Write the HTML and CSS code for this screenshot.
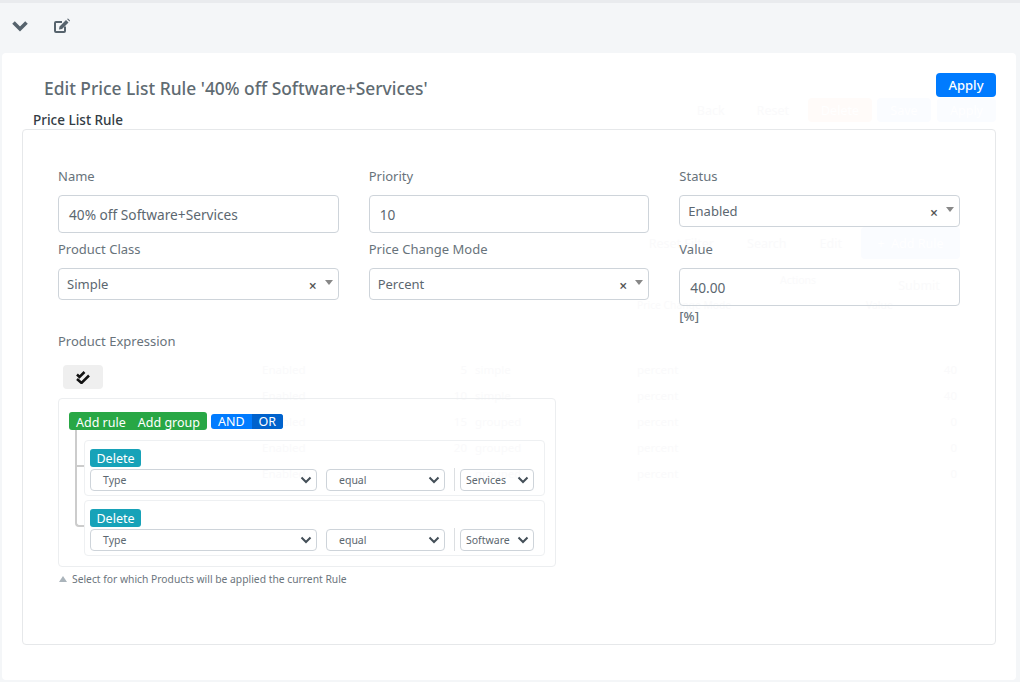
FILE: index.html
```html
<!DOCTYPE html>
<html lang="en">
<head>
  <meta charset="UTF-8">
  <title>Edit Price List Rule</title>
  <link rel="stylesheet" href="styles.css">
</head>
<body>
  <div class="toolbar">
    <svg class="tool-icon" width="18" height="14" viewBox="0 0 18 14"><path d="M2.500 3.500 L9 10 L15.500 3.500" fill="none" stroke="#56636d" stroke-width="3.600"/></svg>
    <svg class="tool-icon edit-icon" width="18" height="16" viewBox="0 0 18 16"><path d="M12 8.500V13a1 1 0 0 1-1 1H3a1 1 0 0 1-1-1V5a1 1 0 0 1 1-1h6" fill="none" stroke="#56636d" stroke-width="2"/><path d="M6.500 8.500 L13 2 L15.500 4.500 L9 11 L6 11.500 Z M14 1 L15 0.500 L17 2.500 L16.500 3.500 Z" fill="#56636d"/></svg>
  </div>

  <div class="card">
    <!-- page behind the dialog, barely showing through -->
    <div class="ghost">
      <div class="ghost-actions">
        <span class="g-back">Back</span>
        <span class="g-reset">Reset</span>
        <span class="g-btn g-delete">Delete</span>
        <span class="g-btn g-save">Save</span>
        <span class="g-btn g-apply">Apply</span>
      </div>
      <div class="ghost-filter">
        <span>Reset Filter</span>
        <span>Search</span>
        <span>Edit</span>
        <span class="g-btn g-add">+ &nbsp;Add Rule</span>
      </div>
      <div class="ghost-submit">
        <span class="g-small">Actions</span>
        <span class="g-submit">Submit</span>
      </div>
      <div class="ghost-head">
        <span>Price Change Mode</span>
        <span>Value</span>
      </div>
      <div class="ghost-table">
        <span>Enabled</span><span class="num">5</span><span class="kind">simple</span><span>percent</span><span class="num">40</span>
        <span>Enabled</span><span class="num">10</span><span class="kind">simple</span><span>percent</span><span class="num">40</span>
        <span>Enabled</span><span class="num">15</span><span class="kind">grouped</span><span>percent</span><span class="num">0</span>
        <span>Enabled</span><span class="num">20</span><span class="kind">grouped</span><span>percent</span><span class="num">0</span>
        <span>Enabled</span><span class="num"></span><span class="kind">grouped</span><span>percent</span><span class="num">0</span>
      </div>
    </div>

    <div class="card-head">
      <h1>Edit Price List Rule '40% off Software+Services'</h1>
      <button class="apply-btn">Apply</button>
    </div>
    <div class="legend">Price List Rule</div>

    <div class="panel">
      <div class="form-grid">
        <div class="field">
          <label>Name</label>
          <div class="text-input">40% off Software+Services</div>
        </div>
        <div class="field">
          <label>Priority</label>
          <div class="text-input">10</div>
        </div>
        <div class="field">
          <label>Status</label>
          <div class="combo"><span>Enabled</span><i class="clear">×</i><i class="caret"></i></div>
        </div>
        <div class="field">
          <label>Product Class</label>
          <div class="combo"><span>Simple</span><i class="clear">×</i><i class="caret"></i></div>
        </div>
        <div class="field">
          <label>Price Change Mode</label>
          <div class="combo"><span>Percent</span><i class="clear">×</i><i class="caret"></i></div>
        </div>
        <div class="field">
          <label>Value</label>
          <div class="text-input">40.00</div>
          <div class="unit">[%]</div>
        </div>
      </div>

      <div class="expression">
        <label>Product Expression</label>
        <button class="check-btn">
          <svg width="14" height="13" viewBox="0 0 14 13"><path d="M1 3.500 L3.500 6 L8.500 1 M1 8 L5.500 12 L13 4.500" fill="none" stroke="#111" stroke-width="2.500"/></svg>
        </button>

        <div class="builder">
          <div class="group-head">
            <div class="btn-group green"><span>Add rule</span><span>Add group</span></div>
            <div class="btn-group blue"><span>AND</span><span class="dark">OR</span></div>
          </div>
          <div class="rules">
            <div class="rule">
              <button class="del-btn">Delete</button>
              <div class="rule-line">
                <div class="sel sel-field">Type<svg width="12" height="8" viewBox="0 0 12 8"><path d="M1.500 1.500 L6 6 L10.500 1.500" fill="none" stroke="#444f58" stroke-width="2"/></svg></div>
                <div class="sel sel-op">equal<svg width="12" height="8" viewBox="0 0 12 8"><path d="M1.500 1.500 L6 6 L10.500 1.500" fill="none" stroke="#444f58" stroke-width="2"/></svg></div>
                <div class="sep"></div>
                <div class="sel sel-val">Services<svg width="12" height="8" viewBox="0 0 12 8"><path d="M1.500 1.500 L6 6 L10.500 1.500" fill="none" stroke="#444f58" stroke-width="2"/></svg></div>
              </div>
            </div>
            <div class="rule">
              <button class="del-btn">Delete</button>
              <div class="rule-line">
                <div class="sel sel-field">Type<svg width="12" height="8" viewBox="0 0 12 8"><path d="M1.500 1.500 L6 6 L10.500 1.500" fill="none" stroke="#444f58" stroke-width="2"/></svg></div>
                <div class="sel sel-op">equal<svg width="12" height="8" viewBox="0 0 12 8"><path d="M1.500 1.500 L6 6 L10.500 1.500" fill="none" stroke="#444f58" stroke-width="2"/></svg></div>
                <div class="sep"></div>
                <div class="sel sel-val">Software<svg width="12" height="8" viewBox="0 0 12 8"><path d="M1.500 1.500 L6 6 L10.500 1.500" fill="none" stroke="#444f58" stroke-width="2"/></svg></div>
              </div>
            </div>
            <div class="tree-line"></div>
          </div>
        </div>

        <div class="hint"><i class="hint-arrow"></i>Select for which Products will be applied the current Rule</div>
      </div>
    </div>
  </div>
</body>
</html>
```

FILE: styles.css
```css
* {
  box-sizing: border-box;
}

body {
  margin: 0;
  height: 682px;
  overflow: hidden;
  font-family: "Noto Sans", "Open Sans", sans-serif;
  font-size: 13px;
  color: #5f6a72;
  background-color: #f4f6f8;
  border-top: 3px solid #e9ebee;
}

.toolbar {
  height: 50px;
  display: flex;
  align-items: center;
  padding: 0 0 4px 11px;
  gap: 24px;
}

.card {
  margin: 0 4px 0 2px;
  height: 627px;
  background-color: #fff;
  border-radius: 4px;
  padding: 20px 20px 0;
  position: relative;
  z-index: 0;
}

.ghost {
  position: absolute;
  inset: 0;
  z-index: -1;
  color: #fafafb;
  font-size: 12.500px;
}

.ghost-actions,
.ghost-filter,
.ghost-submit,
.ghost-head,
.ghost-table {
  position: absolute;
  display: flex;
  align-items: center;
}

.ghost-actions {
  top: 45px;
  right: 20px;
  height: 24px;
}

.g-back {
  margin-right: 32px;
}

.g-reset {
  margin-right: 19px;
}

.g-btn {
  display: flex;
  align-items: center;
  justify-content: center;
  height: 100%;
  border-radius: 4px;
  color: #fff;
}

.g-delete {
  width: 64px;
  margin-right: 5px;
  background-color: #fffbf9;
}

.g-save {
  width: 54px;
  margin-right: 6px;
  background-color: #fafcff;
}

.g-apply {
  width: 59px;
  background-color: #fafcff;
}

.ghost-filter {
  top: 174px;
  right: 56px;
  height: 32px;
  gap: 33px;
}

.g-add {
  width: 99px;
  margin-left: -14px;
  background-color: #fafcff;
}

.ghost-submit {
  top: 212px;
  left: 778px;
  gap: 82px;
}

.g-small {
  font-size: 10.500px;
}

.g-submit {
  margin-top: 12px;
}

.ghost-head {
  top: 245px;
  left: 635px;
  gap: 135px;
  font-size: 10.300px;
}

.ghost-table {
  top: 303px;
  left: 260px;
  display: grid;
  grid-template-columns: 175px 30px 170px 300px 20px;
  grid-auto-rows: 26px;
  font-size: 11.500px;
}

.ghost-table .num {
  text-align: right;
}

.ghost-table .kind {
  padding-left: 8px;
}

.card-head {
  display: flex;
  justify-content: space-between;
  height: 36px;
}

h1 {
  margin: 3px 0 0 22px;
  font-size: 17.400px;
  font-weight: 500;
  line-height: 24px;
  color: #5f6b72;
}

.apply-btn {
  width: 60px;
  height: 24px;
  border: none;
  border-radius: 4px;
  background-color: #007bff;
  color: #fff;
  font: 500 13px "Noto Sans", sans-serif;
}

.legend {
  margin-left: 11px;
  height: 20px;
  line-height: 22px;
  font-size: 13.500px;
  font-weight: 500;
  color: #333c44;
}

.panel {
  height: 516px;
  border: 1px solid #e6e8ea;
  border-radius: 4px;
  padding: 36px 35px 0;
}

.form-grid {
  display: grid;
  grid-template-columns: repeat(3, 1fr);
  column-gap: 30px;
}

label {
  display: block;
  height: 19px;
  line-height: 21px;
  font-size: 13px;
  color: #68737b;
}

.field {
  height: 73px;
}

.field:nth-child(n+4) {
  height: auto;
}

.text-input {
  height: 38px;
  margin-top: 10px;
  padding-left: 10px;
  line-height: 38px;
  border: 1px solid #ced4da;
  border-radius: 4px;
  font-size: 13.700px;
  color: #5c6770;
}

.combo {
  display: flex;
  align-items: center;
  height: 32px;
  margin-top: 10px;
  padding-left: 8px;
  border: 1px solid #ced4da;
  border-radius: 4px;
  font-size: 13px;
  color: #5c6770;
  position: relative;
}

.combo span {
  flex: 1;
}

.clear {
  font-style: normal;
  font-size: 14px;
  font-weight: 600;
  color: #555;
  margin: 2px 21px 0 0;
}

.caret {
  position: absolute;
  right: 5px;
  top: 11px;
  border-left: 4px solid transparent;
  border-right: 4px solid transparent;
  border-top: 5px solid #888;
}

.unit {
  margin-top: 1px;
  line-height: 19px;
  font-size: 13px;
  font-weight: 500;
  color: #68737b;
}

.expression {
  margin-top: 5px;
}

.check-btn {
  display: flex;
  align-items: center;
  justify-content: center;
  width: 40px;
  height: 24px;
  margin: 15px 0 9px 5px;
  padding: 0;
  border: none;
  border-radius: 4px;
  background-color: #efefef;
}

.builder {
  width: 498px;
  height: 169px;
  border: 1px solid #eceef0;
  border-radius: 4px;
  padding: 13px 10px 0;
}

.group-head {
  display: flex;
  align-items: center;
  gap: 4px;
}

.btn-group {
  display: flex;
  color: #fff;
  font-size: 12.500px;
  border-radius: 3px;
  overflow: hidden;
}

.green {
  background-color: #28a745;
  height: 18px;
  line-height: 21px;
  padding: 0 7px;
  gap: 12px;
}

.blue {
  background-color: #007bff;
  height: 15px;
  line-height: 16px;
}

.blue span {
  padding: 0 7px;
}

.blue .dark {
  background-color: #0062cc;
}

.rules {
  position: relative;
  margin-top: 10px;
  padding-left: 15px;
}

.rule {
  height: 56px;
  margin-bottom: 4px;
  padding: 8px 10px 0 5px;
  border: 1px solid #eef0f2;
  border-radius: 4px;
}

.del-btn {
  display: block;
  width: 51px;
  height: 18px;
  padding: 0;
  border: none;
  border-radius: 3px;
  background-color: #17a2b8;
  color: #fff;
  font: 12.500px "Noto Sans", sans-serif;
  line-height: 20px;
}

.rule-line {
  display: flex;
  align-items: center;
  margin-top: 1px;
}

.sel {
  display: flex;
  align-items: center;
  justify-content: space-between;
  height: 22px;
  border: 1px solid #ced4da;
  border-radius: 4px;
  font-size: 10.500px;
  color: #5c6770;
  padding: 0 4px 0 12px;
}

.sel-field {
  width: 227px;
}

.sel-op {
  width: 119px;
  margin-left: 9px;
}

.sel-val {
  width: 74px;
  padding-left: 5px;
}

.sep {
  width: 1px;
  height: 23px;
  margin: 0 5px 0 9px;
  background-color: #dcdfe2;
}

.tree-line {
  position: absolute;
  left: 6px;
  top: -10px;
  width: 9px;
  height: 97px;
  border-left: 2px solid #ccc;
  border-bottom: 2px solid #ccc;
  border-bottom-left-radius: 4px;
}

.tree-line::before {
  content: "";
  position: absolute;
  left: -2px;
  top: 35px;
  width: 9px;
  height: 2px;
  background-color: #ccc;
}

.hint {
  display: flex;
  align-items: center;
  margin-top: 4px;
  height: 16px;
  font-size: 10.300px;
  color: #6c757d;
}

.hint-arrow {
  margin: 0 5px 0 1px;
  border-left: 4px solid transparent;
  border-right: 4px solid transparent;
  border-bottom: 6px solid #aab4bb;
}
```
